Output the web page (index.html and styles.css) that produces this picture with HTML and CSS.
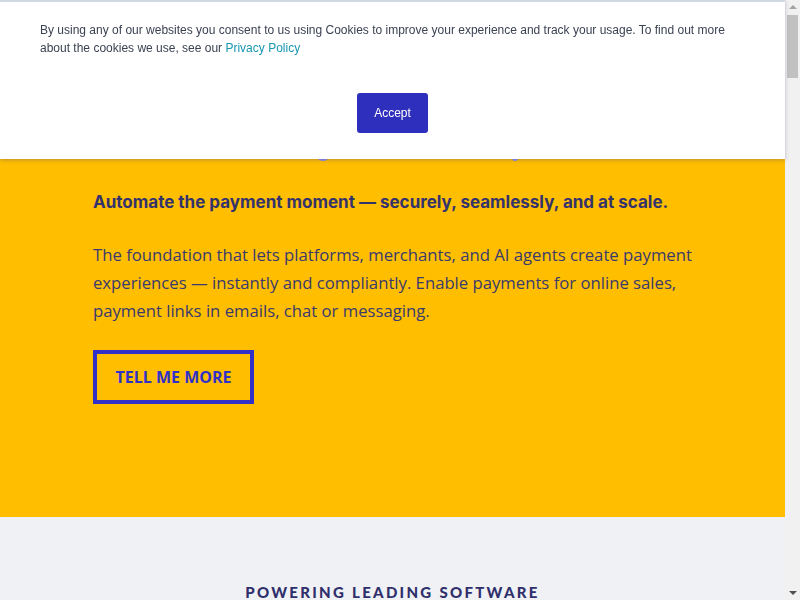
FILE: index.html
```html
<!DOCTYPE html>
<html>
<head>
<meta charset="utf-8">
<link rel="stylesheet" href="styles.css">
</head>
<body>
<div class="page">
  <div class="cookie">
    <p class="cookie-text">By using any of our websites you consent to us using Cookies to improve your experience and track your usage. To find out more about the cookies we use, see our <a href="#" class="cookie-link">Privacy Policy</a></p>
    <div class="cookie-actions"><button class="accept">Accept</button></div>
  </div>
  <main>
    <section class="hero">
      <div class="hero-art">
        <span class="dot dot-a"></span>
        <span class="dot dot-b"></span>
      </div>
      <div class="hero-body">
        <h2 class="tagline">Automate the payment moment — securely, seamlessly, and at scale.</h2>
        <p class="lead">The foundation that lets platforms, merchants, and AI agents create payment experiences — instantly and compliantly. Enable payments for online sales, payment links in emails, chat or messaging.</p>
        <a href="#" class="cta">TELL ME MORE</a>
      </div>
    </section>
    <section class="partners">
      <h3 class="partners-title">POWERING LEADING SOFTWARE</h3>
    </section>
  </main>
</div>
<aside class="scrollbar">
  <span class="arrow arrow-up"></span>
  <span class="thumb"></span>
  <span class="track-fill"></span>
  <span class="arrow arrow-down"></span>
</aside>
</body>
</html>
```
FILE: styles.css
```css
html, body {
  margin: 0;
  padding: 0;
}
body {
  background: #f0f1f5;
  font-family: "Open Sans", sans-serif;
  display: flex;
  align-items: flex-start;
}
.page {
  flex: 1;
  min-width: 0;
}
.scrollbar {
  position: sticky;
  top: 0;
  width: 15px;
  height: 100vh;
  background: #f1f1f1;
  display: flex;
  flex-direction: column;
  align-items: center;
  flex-shrink: 0;
}
.arrow {
  width: 0;
  height: 0;
  border-left: 4px solid transparent;
  border-right: 4px solid transparent;
}
.arrow-up {
  margin-top: 5px;
  border-bottom: 4px solid #a3a3a3;
}
.arrow-down {
  margin-bottom: 5px;
  border-top: 4px solid #505050;
}
.thumb {
  margin-top: 6px;
  width: 11px;
  height: 63px;
  background: #c1c1c1;
}
.track-fill {
  flex: 1;
}
.cookie {
  position: fixed;
  top: 0;
  left: 0;
  right: 15px;
  height: 157px;
  background: #fff;
  border-top: 2px solid #cfd8e3;
  box-shadow: 0 1px 4px rgba(60, 60, 120, 0.35);
  z-index: 10;
}
.cookie-text {
  margin: 0;
  padding: 19px 40px 0 40px;
  font-family: "Liberation Sans", Arial, sans-serif;
  font-size: 12px;
  line-height: 18px;
  color: #3b4252;
}
.cookie-link {
  color: #1797b1;
  text-decoration: none;
}
.cookie-actions {
  display: flex;
  justify-content: center;
  padding-top: 36px;
}
.accept {
  width: 71px;
  height: 40px;
  border: 0;
  border-radius: 3px;
  background: #2f2fbe;
  color: #fff;
  font-family: "Liberation Sans", Arial, sans-serif;
  font-size: 12px;
  padding: 0;
}
.hero {
  background: #ffbe00;
  height: 517px;
}
.hero-art {
  height: 160px;
  position: relative;
}
.dot {
  position: absolute;
  top: 155px;
  width: 10px;
  height: 6px;
  border-radius: 50%;
  background: #8f8ff0;
}
.dot-a { left: 318px; }
.dot-b { left: 512px; width: 6px; }
.hero-body {
  padding: 30px 93px 0 93px;
}
.tagline {
  margin: 0;
  font-family: "Inter", sans-serif;
  font-weight: 700;
  font-size: 17px;
  line-height: 24px;
  color: #35336b;
}
.lead {
  margin: 27px 0 0 0;
  font-size: 16.7px;
  line-height: 28px;
  color: #3a3a6e;
  max-width: 610px;
}
.cta {
  display: inline-block;
  margin-top: 25px;
  width: 161px;
  height: 54px;
  box-sizing: border-box;
  border: 4px solid #3131c7;
  color: #3131c7;
  font-weight: 700;
  font-size: 16px;
  line-height: 46px;
  text-align: center;
  text-decoration: none;
}
.partners {
  height: 600px;
  padding-top: 66px;
  box-sizing: border-box;
}
.partners-title {
  margin: 0;
  text-align: center;
  font-family: "Lato", sans-serif;
  font-weight: 900;
  font-size: 15px;
  letter-spacing: 2.3px;
  color: #2f2f6b;
}
```
